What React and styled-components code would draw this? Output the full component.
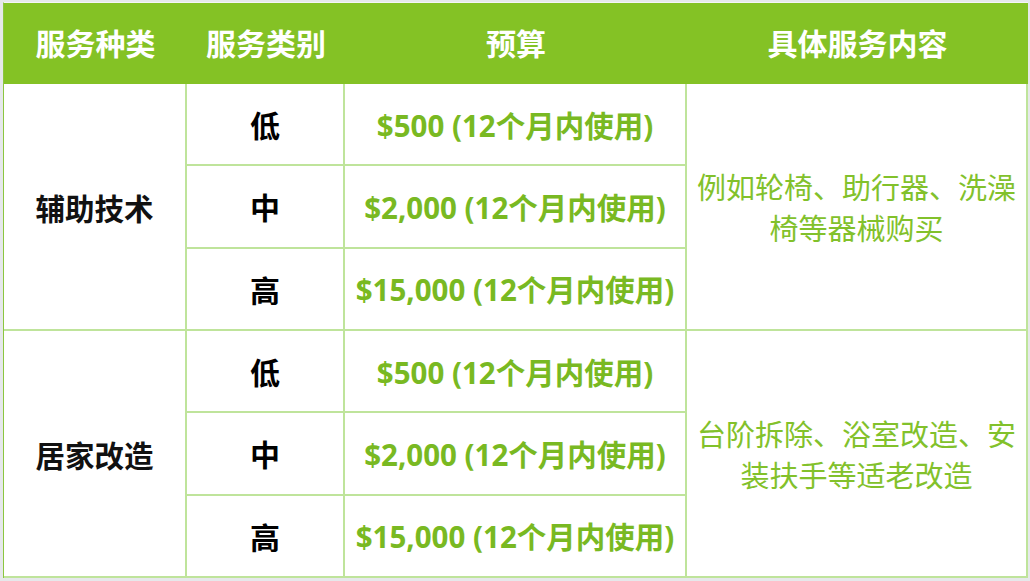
import React from "react";
import styled, { createGlobalStyle } from "styled-components";

const GlobalStyle = createGlobalStyle`
  html, body {
    margin: 0;
    padding: 0;
    background: #e6e8eb;
  }
  body {
    font-family: "Open Sans", "Noto Sans CJK SC", sans-serif;
  }
`;

const Page = styled.div`
  width: 1030px;
  height: 581px;
  box-sizing: border-box;
  padding: 2px 2px 3px 3px;
  background: #e6e8eb;
`;

const Table = styled.div`
  display: grid;
  grid-template-columns: 183px 158px 342px 1fr;
  grid-template-rows: 81px repeat(6, 1fr);
  height: 100%;
  background: #ffffff;
  border-left: 1px solid #8cc63f;
  border-top: 1px solid #f4f5f6;
  box-sizing: border-box;
`;

const HeadCell = styled.div`
  background: #84c225;
  color: #ffffff;
  font-family: "Noto Sans CJK SC", sans-serif;
  font-weight: 700;
  font-size: 30px;
  display: flex;
  align-items: center;
  justify-content: center;
  padding-bottom: 4px;
  box-sizing: border-box;
`;

const Cell = styled.div`
  display: flex;
  align-items: center;
  justify-content: center;
  text-align: center;
  border-right: 2px solid #bfe49b;
  border-bottom: 2px solid #bfe49b;
  grid-row: ${(p) => p.$span ? `span ${p.$span}` : "auto"};
  box-sizing: border-box;
  padding: 0 6px;
`;

const TypeText = styled.span`
  font-family: "Noto Sans CJK SC", sans-serif;
  font-weight: 700;
  font-size: 29.5px;
  color: #111111;
`;

const LevelText = styled.span`
  font-family: "Noto Sans CJK SC", sans-serif;
  font-weight: 700;
  font-size: 30px;
  color: #000000;
`;

const Budget = styled.span`
  font-family: "Open Sans", "Noto Sans CJK SC", sans-serif;
  font-weight: 700;
  font-size: 29.5px;
  color: #79b922;
  white-space: nowrap;
`;

const Desc = styled.span`
  font-family: "Noto Sans CJK SC", sans-serif;
  font-weight: 400;
  font-size: 29px;
  line-height: 41px;
  color: #82c12b;
`;

const groups = [
  {
    name: "辅助技术",
    desc: ["例如轮椅、助行器、洗澡", "椅等器械购买"],
  },
  {
    name: "居家改造",
    desc: ["台阶拆除、浴室改造、安", "装扶手等适老改造"],
  },
];

const levels = [
  { level: "低", budget: "$500 (12个月内使用)" },
  { level: "中", budget: "$2,000 (12个月内使用)" },
  { level: "高", budget: "$15,000 (12个月内使用)" },
];

const App = () => {
  return (
    <>
      <GlobalStyle />
      <Page>
        <Table>
          <HeadCell>服务种类</HeadCell>
          <HeadCell>服务类别</HeadCell>
          <HeadCell>预算</HeadCell>
          <HeadCell>具体服务内容</HeadCell>
          {groups.map((g) =>
            levels.map((l, i) => (
              <React.Fragment key={g.name + l.level}>
                {i === 0 && (
                  <Cell $span={3}>
                    <TypeText>{g.name}</TypeText>
                  </Cell>
                )}
                <Cell>
                  <LevelText>{l.level}</LevelText>
                </Cell>
                <Cell>
                  <Budget>{l.budget}</Budget>
                </Cell>
                {i === 0 && (
                  <Cell $span={3}>
                    <Desc>
                      {g.desc[0]}
                      <br />
                      {g.desc[1]}
                    </Desc>
                  </Cell>
                )}
              </React.Fragment>
            ))
          )}
        </Table>
      </Page>
    </>
  );
};

export default App;
